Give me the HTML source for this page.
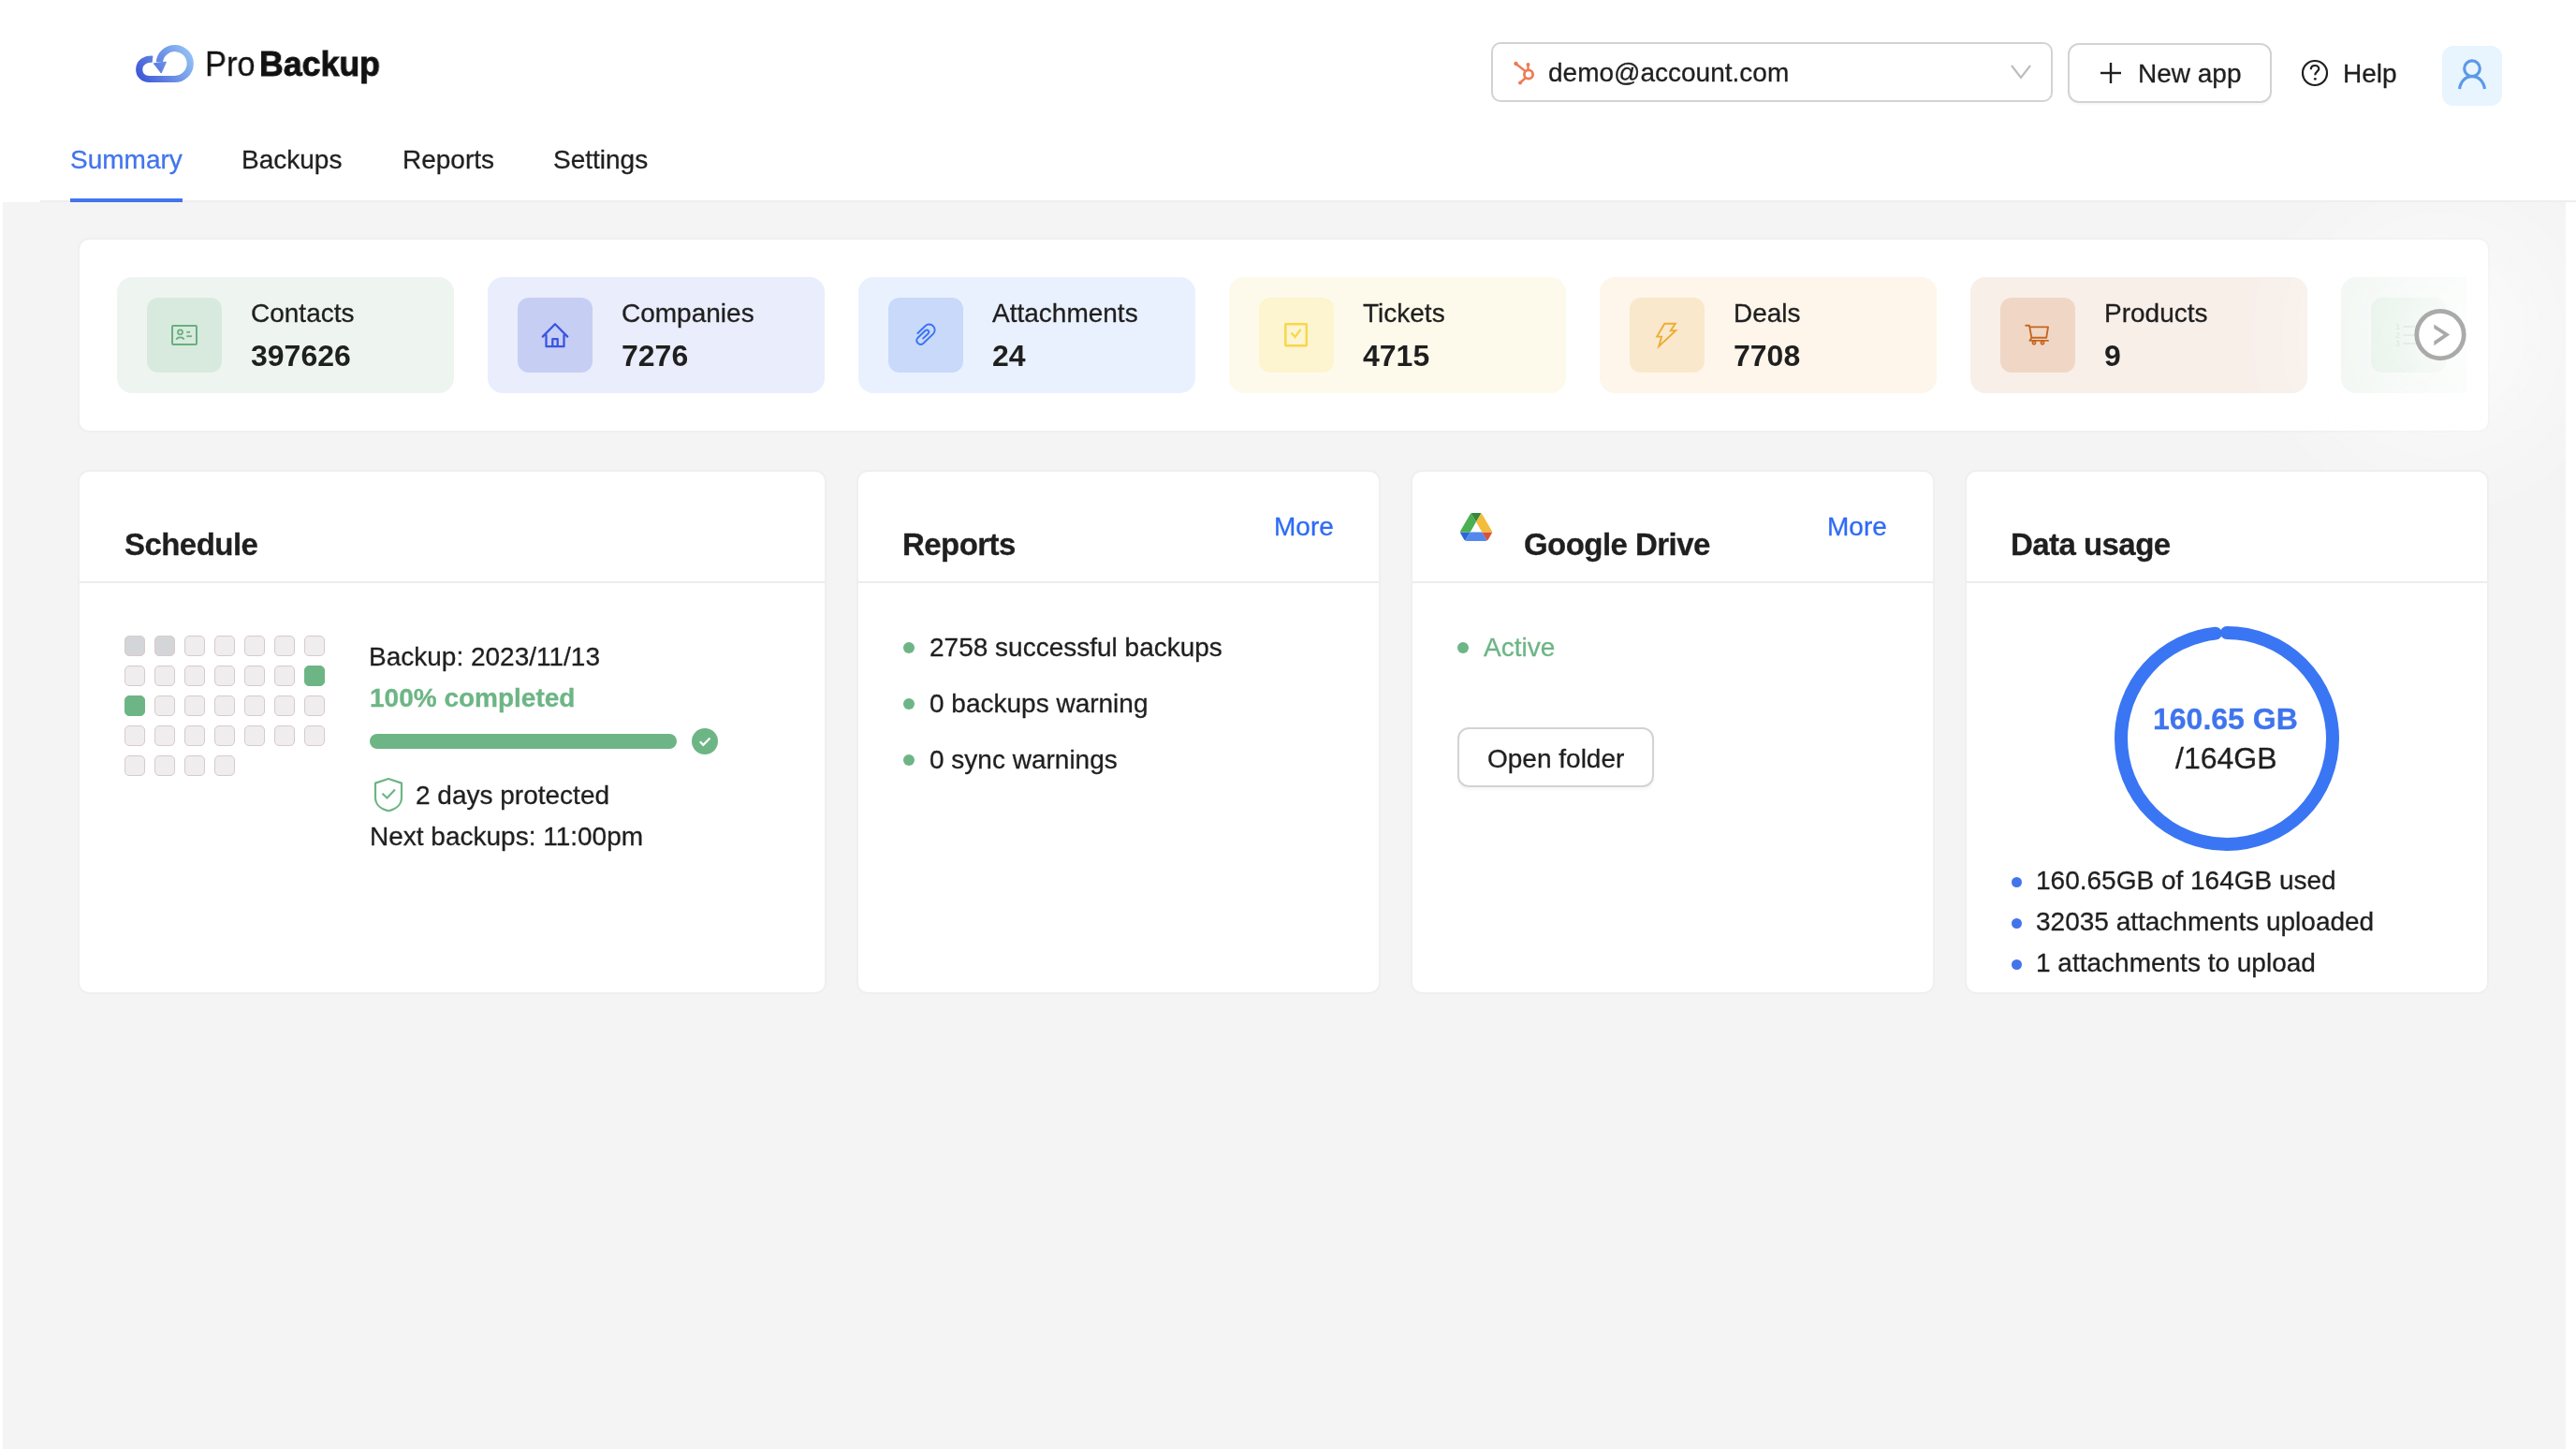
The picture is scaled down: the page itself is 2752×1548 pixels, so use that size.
<!DOCTYPE html>
<html><head><meta charset="utf-8">
<style>
html,body{margin:0;padding:0;}
@media (max-width:2000px){html{zoom:0.5;}}
body{width:2752px;height:1548px;position:relative;overflow:hidden;background:#fff;font-family:"Liberation Sans",sans-serif;color:#1f1f1f;}
.a{position:absolute;}
.t{position:absolute;white-space:nowrap;font-size:28px;line-height:28px;will-change:transform;-webkit-text-stroke:0.3px currentColor;}
.b{font-weight:bold;}
.card{position:absolute;background:#fff;border:2px solid #efefef;border-radius:12px;box-sizing:border-box;}
.tile{position:absolute;top:296px;width:360px;height:124px;border-radius:16px;}
.ibox{position:absolute;left:32px;top:22px;width:80px;height:80px;border-radius:12px;}
.ibox svg{position:absolute;left:0;top:0;}
.lbl{position:absolute;left:143px;top:25px;font-size:28px;line-height:28px;white-space:nowrap;will-change:transform;-webkit-text-stroke:0.3px currentColor;}
.num{position:absolute;left:143px;top:68px;font-size:32px;line-height:32px;font-weight:bold;white-space:nowrap;will-change:transform;}
.sq{position:absolute;width:22px;height:22px;box-sizing:border-box;border:1px solid #d9caca;background:#efedee;border-radius:5px;}
.div{position:absolute;left:0;right:0;top:117px;height:2px;background:#ececec;}
.dot{position:absolute;width:12px;height:12px;border-radius:50%;}
</style></head>
<body>
<!-- gray page -->
<div class="a" style="left:3px;top:216px;width:2738px;height:1332px;background:#f4f4f4;"></div>
<div class="a" style="left:43px;top:214px;width:2709px;height:2px;background:#eeeeee;"></div>

<!-- logo -->
<svg class="a" style="left:140px;top:40px" width="72" height="54" viewBox="140 40 72 54">
<defs><linearGradient id="lg" gradientUnits="userSpaceOnUse" x1="148" y1="88" x2="206" y2="52"><stop offset="0" stop-color="#3b52d4"/><stop offset="1" stop-color="#98c8f6"/></linearGradient></defs>
<path d="M163 63.3 C156 62.5 148.7 66.5 148.7 74 C148.7 80.5 153.5 84.5 159.5 84.5 L186.5 84.5 A16.5 16.5 0 1 0 170.3 66.5" fill="none" stroke="url(#lg)" stroke-width="7.2" stroke-linecap="butt"/>
<path d="M164.3 67.8 L177.5 66.2 L172.2 78 Z" fill="url(#lg)" stroke="url(#lg)" stroke-width="1" stroke-linejoin="round"/>
</svg>
<div class="t" style="left:219px;top:50px;font-size:37px;line-height:37px;transform:scaleX(0.93);transform-origin:0 0;color:#111;">Pro</div>
<div class="t b" style="left:277px;top:50px;font-size:37px;line-height:37px;transform:scaleX(0.965);transform-origin:0 0;color:#111;-webkit-text-stroke:0.9px #111;">Backup</div>

<!-- nav -->
<div class="t" style="left:75px;top:157px;color:#4274ec;">Summary</div>
<div class="a" style="left:75px;top:212px;width:120px;height:4px;background:#4274ec;"></div>
<div class="t" style="left:258px;top:157px;">Backups</div>
<div class="t" style="left:430px;top:157px;">Reports</div>
<div class="t" style="left:591px;top:157px;">Settings</div>

<!-- header right -->
<div class="a" style="left:1593px;top:45px;width:600px;height:64px;box-sizing:border-box;border:2px solid #d3d3d3;border-radius:10px;"></div>
<svg class="a" style="left:1612px;top:63px" width="32" height="32" viewBox="0 0 32 32">
<circle cx="21" cy="16.5" r="4.6" fill="none" stroke="#ee7b55" stroke-width="2.8"/>
<line x1="17.5" y1="13" x2="8" y2="5.5" stroke="#ee7b55" stroke-width="2.4"/>
<circle cx="7.5" cy="5" r="2.2" fill="#ee7b55"/>
<line x1="20.5" y1="12" x2="20.5" y2="7" stroke="#ee7b55" stroke-width="2.4"/>
<circle cx="20.5" cy="6" r="2" fill="#ee7b55"/>
<line x1="18" y1="20" x2="12.5" y2="25" stroke="#ee7b55" stroke-width="2.4"/>
<circle cx="12" cy="25.5" r="2" fill="#ee7b55"/>
</svg>
<div class="t" style="left:1654px;top:64px;">demo@account.com</div>
<svg class="a" style="left:2146px;top:66px" width="26" height="22" viewBox="0 0 26 22">
<polyline points="3,4 13,17 23,4" fill="none" stroke="#bdbdbd" stroke-width="2.2"/>
</svg>
<div class="a" style="left:2209px;top:46px;width:218px;height:64px;box-sizing:border-box;border:2px solid #d3d3d3;border-radius:12px;box-shadow:0 2px 2px rgba(0,0,0,0.03);"></div>
<svg class="a" style="left:2240px;top:63px" width="30" height="30" viewBox="0 0 30 30">
<line x1="4" y1="15" x2="26" y2="15" stroke="#1f1f1f" stroke-width="2.4"/>
<line x1="15" y1="4" x2="15" y2="26" stroke="#1f1f1f" stroke-width="2.4"/>
</svg>
<div class="t" style="left:2284px;top:65px;">New app</div>
<svg class="a" style="left:2456px;top:61px" width="34" height="34" viewBox="0 0 34 34">
<circle cx="17" cy="17" r="13" fill="none" stroke="#1f1f1f" stroke-width="2.2"/>
<path d="M12.8 13.2 C12.8 10.5 14.8 9 17.2 9 C19.6 9 21.3 10.6 21.3 12.6 C21.3 15.2 17.3 15.8 17.3 19.2" fill="none" stroke="#1f1f1f" stroke-width="2.2"/>
<circle cx="17.3" cy="23.3" r="1.4" fill="#1f1f1f"/>
</svg>
<div class="t" style="left:2503px;top:65px;">Help</div>
<div class="a" style="left:2609px;top:49px;width:64px;height:64px;border-radius:12px;background:#e8f4fe;"></div>
<svg class="a" style="left:2609px;top:49px" width="64" height="64" viewBox="0 0 64 64">
<circle cx="32" cy="24.2" r="8.3" fill="none" stroke="#5b9ae6" stroke-width="3.2"/>
<path d="M18.6 46 C19.5 38 25 32.6 32 32.6 C39 32.6 44.5 38 45.4 46" fill="none" stroke="#5b9ae6" stroke-width="3.2"/>
</svg>

<!-- stats card -->
<div class="card" style="left:83px;top:254px;width:2577px;height:208px;"></div>
<div class="a" id="tiles" style="left:0;top:0;width:2635px;height:1548px;overflow:hidden;">
 <div class="tile" style="left:125px;background:#eef5f0;">
  <div class="ibox" style="background:#d8eadd;">
   <svg width="80" height="80" viewBox="0 0 80 80">
    <rect x="27" y="30" width="26" height="20" rx="1" fill="none" stroke="#68b07f" stroke-width="2"/>
    <circle cx="35.5" cy="36.8" r="2.5" fill="none" stroke="#68b07f" stroke-width="1.8"/>
    <path d="M31.5 44.8 C32.3 41.5 38.7 41.5 39.5 44.8" fill="none" stroke="#68b07f" stroke-width="1.8"/>
    <line x1="42.3" y1="36.8" x2="46" y2="36.8" stroke="#68b07f" stroke-width="1.8"/>
    <line x1="42.3" y1="41.2" x2="48" y2="41.2" stroke="#68b07f" stroke-width="1.8"/>
   </svg>
  </div>
  <div class="lbl">Contacts</div><div class="num">397626</div>
 </div>
 <div class="tile" style="left:521px;background:#eaedfb;">
  <div class="ibox" style="background:#c7cef4;">
   <svg width="80" height="80" viewBox="0 0 80 80">
    <path d="M26.8 41.6 L40 28.3 L53.2 41.6 M30.5 40.2 V52.2 H49.5 V40.2 M37.3 52.2 V44.2 H42.7 V52.2" fill="none" stroke="#3a55e0" stroke-width="2.3" stroke-linejoin="round" stroke-linecap="round"/>
   </svg>
  </div>
  <div class="lbl">Companies</div><div class="num">7276</div>
 </div>
 <div class="tile" style="left:917px;background:#eaf1fe;">
  <div class="ibox" style="background:#c8d9fa;">
   <svg width="80" height="80" viewBox="0 0 80 80">
    <path d="M31.4 38 L39.5 30.2 A6 6 0 0 1 47.8 38.9 L37.2 49 A4.2 4.2 0 0 1 31.4 43 L39.7 35 A2.2 2.2 0 0 1 42.7 38.2 L37.1 43.6" fill="none" stroke="#3a72f0" stroke-width="1.9" stroke-linecap="round" stroke-linejoin="round"/>
   </svg>
  </div>
  <div class="lbl">Attachments</div><div class="num">24</div>
 </div>
 <div class="tile" style="left:1313px;background:#fefaeb;">
  <div class="ibox" style="background:#fdf4d0;">
   <svg width="80" height="80" viewBox="0 0 80 80">
    <rect x="28.3" y="28.3" width="22.5" height="23" rx="0.5" fill="none" stroke="#f9d64b" stroke-width="2.4"/>
    <polyline points="34.5,37.5 38.5,42 44.5,34" fill="none" stroke="#f9d64b" stroke-width="2.2"/>
   </svg>
  </div>
  <div class="lbl">Tickets</div><div class="num">4715</div>
 </div>
 <div class="tile" style="left:1709px;background:#fef6eb;">
  <div class="ibox" style="background:#f9e8cc;">
   <svg width="80" height="80" viewBox="0 0 80 80">
    <path d="M37.3 27.8 H48.8 L43.8 35.2 H49.2 L31.2 52 L34.2 41.6 H29.2 Z" fill="none" stroke="#eeac35" stroke-width="1.9" stroke-linejoin="miter"/>
   </svg>
  </div>
  <div class="lbl">Deals</div><div class="num">7708</div>
 </div>
 <div class="tile" style="left:2105px;background:#f8efe9;">
  <div class="ibox" style="background:#f0d7c5;">
   <svg width="80" height="80" viewBox="0 0 80 80">
    <path d="M27.2 29.8 H31 L33.4 42.8 H49.2 L51 31.4 H31.5 M33.4 42.8 L31.5 45.9 H51" fill="none" stroke="#c7651f" stroke-width="1.9" stroke-linejoin="round" stroke-linecap="round"/>
    <circle cx="36" cy="48.3" r="1.6" fill="none" stroke="#c7651f" stroke-width="1.7"/>
    <circle cx="45" cy="48.3" r="1.6" fill="none" stroke="#c7651f" stroke-width="1.7"/>
   </svg>
  </div>
  <div class="lbl">Products</div><div class="num">9</div>
 </div>
 <div class="tile" style="left:2501px;background:#eef5f0;">
  <div class="ibox" style="background:#d8eadc;">
   <svg width="80" height="80" viewBox="0 0 80 80">
    <g stroke="#a3d2b0" stroke-width="2" fill="none">
    <line x1="34.5" y1="31" x2="60" y2="31"/><line x1="34.5" y1="40" x2="60" y2="40"/><line x1="34.5" y1="49" x2="60" y2="49"/>
    </g>
    <g fill="#a3d2b0" font-family="Liberation Sans" font-size="8.5" font-weight="bold" text-anchor="middle">
    <text x="28.5" y="34">1</text><text x="28.5" y="43">2</text><text x="28.5" y="52">3</text>
    </g>
   </svg>
  </div>
 </div>
 <div class="a" style="left:2501px;top:296px;width:134px;height:124px;background:linear-gradient(to right,rgba(255,255,255,0) 0%,rgba(255,255,255,0.1) 50%,rgba(255,255,255,0.5) 100%);"></div>
</div>
<div class="a" style="left:2347px;top:216px;width:405px;height:402px;overflow:hidden;"><div class="a" style="left:0;top:-118px;width:520px;height:520px;background:radial-gradient(circle at center,rgba(255,255,255,0.55) 0,rgba(255,255,255,0.38) 90px,rgba(255,255,255,0.12) 170px,rgba(255,255,255,0) 230px);"></div></div>
<div class="a" style="left:2497px;top:248px;width:220px;height:220px;background:radial-gradient(circle at center,rgba(255,255,255,0.4) 0,rgba(255,255,255,0.2) 50px,rgba(255,255,255,0) 110px);"></div>
<svg class="a" style="left:2575px;top:326px" width="64" height="64" viewBox="0 0 64 64">
 <circle cx="32" cy="31.6" r="25.2" fill="#fff" stroke="#aaaaaa" stroke-width="4.8"/>
 <path d="M25.3 20.4 L42.2 31.6 L25.3 43.2 L25.3 38.6 L35.6 31.6 L25.3 25 Z" fill="#aaaaaa"/>
</svg>

<!-- Schedule card -->
<div class="card" style="left:83px;top:502px;width:800px;height:560px;">
 <div class="div"></div>
</div>
<div class="t b" style="left:133px;top:565px;font-size:33px;line-height:33px;letter-spacing:-0.55px;">Schedule</div>
<div id="grid">
<div class="sq" style="left:133px;top:679px;background:#d4d5d9;"></div>
<div class="sq" style="left:165px;top:679px;background:#d4d5d9;"></div>
<div class="sq" style="left:197px;top:679px;"></div>
<div class="sq" style="left:229px;top:679px;"></div>
<div class="sq" style="left:261px;top:679px;"></div>
<div class="sq" style="left:293px;top:679px;"></div>
<div class="sq" style="left:325px;top:679px;"></div>
<div class="sq" style="left:133px;top:711px;"></div>
<div class="sq" style="left:165px;top:711px;"></div>
<div class="sq" style="left:197px;top:711px;"></div>
<div class="sq" style="left:229px;top:711px;"></div>
<div class="sq" style="left:261px;top:711px;"></div>
<div class="sq" style="left:293px;top:711px;"></div>
<div class="sq" style="left:325px;top:711px;background:#6db585;border-color:#6db585;"></div>
<div class="sq" style="left:133px;top:743px;background:#6db585;border-color:#6db585;"></div>
<div class="sq" style="left:165px;top:743px;"></div>
<div class="sq" style="left:197px;top:743px;"></div>
<div class="sq" style="left:229px;top:743px;"></div>
<div class="sq" style="left:261px;top:743px;"></div>
<div class="sq" style="left:293px;top:743px;"></div>
<div class="sq" style="left:325px;top:743px;"></div>
<div class="sq" style="left:133px;top:775px;"></div>
<div class="sq" style="left:165px;top:775px;"></div>
<div class="sq" style="left:197px;top:775px;"></div>
<div class="sq" style="left:229px;top:775px;"></div>
<div class="sq" style="left:261px;top:775px;"></div>
<div class="sq" style="left:293px;top:775px;"></div>
<div class="sq" style="left:325px;top:775px;"></div>
<div class="sq" style="left:133px;top:807px;"></div>
<div class="sq" style="left:165px;top:807px;"></div>
<div class="sq" style="left:197px;top:807px;"></div>
<div class="sq" style="left:229px;top:807px;"></div>
</div>
<div class="t" style="left:394px;top:688px;">Backup: 2023/11/13</div>
<div class="t b" style="left:395px;top:732px;color:#6db585;">100% completed</div>
<div class="a" style="left:395px;top:784px;width:328px;height:16px;border-radius:8px;background:#6db585;"></div>
<svg class="a" style="left:739px;top:778px" width="28" height="28" viewBox="0 0 28 28">
 <circle cx="14" cy="14" r="14" fill="#6db585"/>
 <polyline points="8.8,14.2 12.3,17.8 19.5,10.4" fill="none" stroke="#fff" stroke-width="2.2"/>
</svg>
<svg class="a" style="left:397px;top:829px" width="36" height="40" viewBox="0 0 36 40">
 <path d="M18 3 L32 7.6 V23 C32 30.5 26 35.5 18 37.3 C10 35.5 4 30.5 4 23 V7.6 Z" fill="none" stroke="#6db585" stroke-width="2.2" stroke-linejoin="round"/>
 <polyline points="11.5,18.8 16.5,23.5 25,14.6" fill="none" stroke="#6db585" stroke-width="2.2"/>
</svg>
<div class="t" style="left:444px;top:836px;">2 days protected</div>
<div class="t" style="left:395px;top:880px;">Next backups: 11:00pm</div>

<!-- Reports card -->
<div class="card" style="left:915px;top:502px;width:560px;height:560px;">
 <div class="div"></div>
</div>
<div class="t b" style="left:964px;top:565px;font-size:33px;line-height:33px;letter-spacing:-0.55px;">Reports</div>
<div class="t" style="left:1361px;top:549px;color:#2f6cf5;">More</div>
<div class="dot" style="left:965px;top:686px;background:#6db585;"></div>
<div class="t" style="left:993px;top:678px;">2758 successful backups</div>
<div class="dot" style="left:965px;top:746px;background:#6db585;"></div>
<div class="t" style="left:993px;top:738px;">0 backups warning</div>
<div class="dot" style="left:965px;top:806px;background:#6db585;"></div>
<div class="t" style="left:993px;top:798px;">0 sync warnings</div>

<!-- Google Drive card -->
<div class="card" style="left:1507px;top:502px;width:560px;height:560px;">
 <div class="div"></div>
</div>
<svg class="a" style="left:1560px;top:548px" width="34" height="30" viewBox="0 0 87.3 78" preserveAspectRatio="none">
 <path d="m6.6 66.85 3.85 6.65c.8 1.4 1.95 2.5 3.3 3.3l13.75-23.8h-27.5c0 1.550.4 3.1 1.2 4.5z" fill="#2a67d6"/>
 <path d="m43.65 25-13.75-23.8c-1.35.8-2.5 1.9-3.3 3.3l-25.4 44a9.06 9.06 0 0 0 -1.2 4.5h27.5z" fill="#4caf52"/>
 <path d="m73.55 76.8c1.35-.8 2.5-1.9 3.3-3.3l1.6-2.75 7.65-13.250c.8-1.4 1.2-2.95 1.2-4.5h-27.502l5.852 11.5z" fill="#dc5139"/>
 <path d="m43.650 25 13.75-23.8c-1.35-.8-2.9-1.2-4.5-1.2h-18.5c-1.6 0-3.15.45-4.5 1.2z" fill="#35883c"/>
 <path d="m59.8 53h-32.3l-13.75 23.8c1.35.8 2.9 1.2 4.5 1.2h50.8c1.6 0 3.15-.45 4.5-1.2z" fill="#5488ec"/>
 <path d="m73.4 26.5-12.7-22c-.8-1.4-1.95-2.5-3.3-3.3l-13.75 23.8 16.15 28h27.450c0-1.55-.4-3.1-1.2-4.5z" fill="#f2bc3c"/>
</svg>
<div class="t b" style="left:1628px;top:565px;font-size:33px;line-height:33px;letter-spacing:-0.55px;">Google Drive</div>
<div class="t" style="left:1952px;top:549px;color:#2f6cf5;">More</div>
<div class="dot" style="left:1557px;top:686px;background:#6db585;"></div>
<div class="t" style="left:1585px;top:678px;color:#6db585;">Active</div>
<div class="a" style="left:1557px;top:777px;width:210px;height:64px;box-sizing:border-box;border:2px solid #d3d3d3;border-radius:12px;box-shadow:0 3px 3px rgba(0,0,0,0.035);"></div>
<div class="t" style="left:1589px;top:797px;">Open folder</div>

<!-- Data usage card -->
<div class="card" style="left:2099px;top:502px;width:560px;height:560px;">
 <div class="div"></div>
</div>
<div class="t b" style="left:2148px;top:565px;font-size:33px;line-height:33px;letter-spacing:-0.55px;">Data usage</div>
<svg class="a" style="left:2259px;top:669px" width="240" height="240" viewBox="0 0 240 240">
 <circle cx="120" cy="120" r="113" fill="none" stroke="#3a76f3" stroke-width="14" stroke-linecap="round" stroke-dasharray="697 800" transform="rotate(-90 120 120)"/>
</svg>
<div class="t b" style="left:2300px;top:752px;font-size:32px;line-height:32px;color:#3f74ee;">160.65 GB</div>
<div class="t" style="left:2324px;top:794px;font-size:32px;line-height:32px;">/164GB</div>
<div class="dot" style="left:2149px;top:937px;background:#4274ec;width:11px;height:11px;"></div>
<div class="t" style="left:2175px;top:927px;">160.65GB of 164GB used</div>
<div class="dot" style="left:2149px;top:981px;background:#4274ec;width:11px;height:11px;"></div>
<div class="t" style="left:2175px;top:971px;">32035 attachments uploaded</div>
<div class="dot" style="left:2149px;top:1025px;background:#4274ec;width:11px;height:11px;"></div>
<div class="t" style="left:2175px;top:1015px;">1 attachments to upload</div>

</body></html>
